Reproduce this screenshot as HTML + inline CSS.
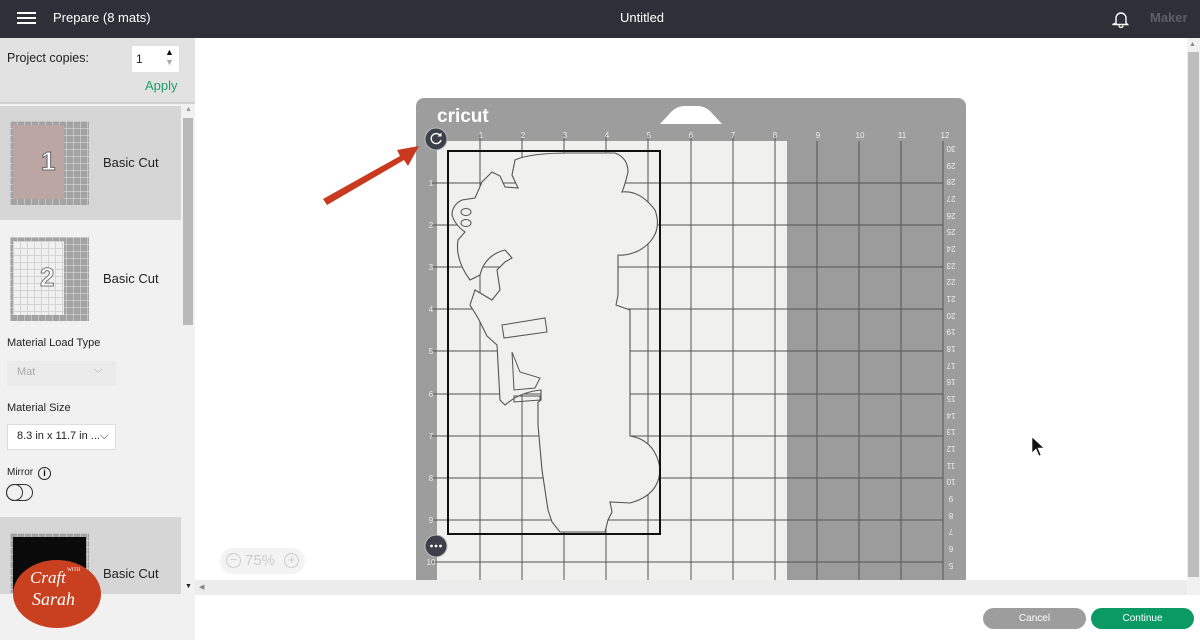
<!DOCTYPE html>
<html><head><meta charset="utf-8"><style>
*{margin:0;padding:0;box-sizing:border-box}
body{width:1200px;height:640px;overflow:hidden;background:#fff;font-family:"Liberation Sans",sans-serif;position:relative}
.a{position:absolute}
.th{background:#a3a3a3;background-image:linear-gradient(90deg,rgba(255,255,255,.35) 1px,transparent 1px),linear-gradient(rgba(255,255,255,.35) 1px,transparent 1px);background-size:7px 7px}
</style></head><body>
<div class="a" style="left:0;top:0;width:1200px;height:38px;background:#2e3037"></div>
<div class="a" style="left:17px;top:12px;width:19px;height:2px;background:#fff;box-shadow:0 5px 0 #fff,0 10px 0 #fff"></div>
<div class="a" style="left:53px;top:10px;color:#fff;font-size:13px">Prepare (8 mats)</div>
<div class="a" style="left:0;top:10px;text-align:center;color:#fff;font-size:13px;width:1284px">Untitled</div>
<svg class="a" style="left:1112px;top:10px" width="18" height="18" viewBox="0 0 18 18"><path d="M4 13V8a5 5 0 0 1 10 0v5l1.5 1.5h-15z M7 15.5a2 2 0 0 0 4 0" fill="none" stroke="#fff" stroke-width="1.4"/></svg>
<div class="a" style="left:1150px;top:10px;color:#5c5f66;font-size:13px;font-weight:bold">Maker</div>

<div class="a" style="left:0;top:38px;width:195px;height:602px;background:#f1f1f1"></div>
<div class="a" style="left:0;top:38px;width:195px;height:66px;background:#e2e2e2;border-bottom:2px solid #d0d0d0"></div>
<div class="a" style="left:7px;top:51px;font-size:12.5px;color:#222">Project copies:</div>
<div class="a" style="left:132px;top:46px;width:47px;height:26px;background:#fff;border-radius:2px"></div>
<div class="a" style="left:136px;top:52px;font-size:12px;color:#222">1</div>
<div class="a" style="left:165px;top:47px;font-size:9px;color:#111">▲</div>
<div class="a" style="left:165px;top:57px;font-size:9px;color:#aaa">▼</div>
<div class="a" style="left:145px;top:78px;font-size:13px;color:#1e9e68">Apply</div>

<div class="a" style="left:0;top:106px;width:181px;height:114px;background:#d6d6d6"></div>
<div class="a" style="left:0;top:517px;width:181px;height:77px;background:#d6d6d6"></div>

<div class="a th" style="left:10px;top:121px;width:79px;height:84px"></div>
<div class="a" style="left:13px;top:125px;width:51px;height:74px;background:#bba6a3"></div>
<div class="a" style="left:41px;top:146px;font-size:26px;color:#fff;font-weight:bold;-webkit-text-stroke:1px #666">1</div>
<div class="a" style="left:103px;top:155px;font-size:13px;color:#222">Basic Cut</div>

<div class="a th" style="left:10px;top:237px;width:79px;height:84px"></div>
<div class="a" style="left:13px;top:241px;width:51px;height:74px;background:#f0f0f0;background-image:linear-gradient(90deg,#d4d4d4 1px,transparent 1px),linear-gradient(#d4d4d4 1px,transparent 1px);background-size:7px 7px"></div>
<div class="a" style="left:40px;top:262px;font-size:26px;color:#fff;font-weight:bold;-webkit-text-stroke:1px #777">2</div>
<div class="a" style="left:103px;top:271px;font-size:13px;color:#222">Basic Cut</div>

<div class="a" style="left:7px;top:337px;font-size:11px;color:#222">Material Load Type</div>
<div class="a" style="left:7px;top:361px;width:109px;height:25px;background:#ebebeb"></div>
<div class="a" style="left:17px;top:366px;font-size:11px;color:#aaa">Mat</div>
<div class="a" style="left:94px;top:364px;font-size:11px;color:#aaa">⌵</div>
<div class="a" style="left:7px;top:402px;font-size:11px;color:#222">Material Size</div>
<div class="a" style="left:7px;top:424px;width:109px;height:26px;background:#fff;border:1px solid #ddd"></div>
<div class="a" style="left:17px;top:430px;font-size:11px;color:#222">8.3 in x 11.7 in ...⌵</div>
<div class="a" style="left:7px;top:467px;font-size:10px;color:#222">Mirror</div>
<div class="a" style="left:38px;top:467px;width:13px;height:13px;border:1.3px solid #222;border-radius:50%;font-size:9px;text-align:center;line-height:11px;font-weight:bold">i</div>
<div class="a" style="left:6px;top:484px;width:27px;height:17px;border:1.3px solid #333;border-radius:9px"></div>
<div class="a" style="left:6px;top:484px;width:17px;height:17px;border:1.3px solid #333;border-radius:50%"></div>

<div class="a th" style="left:10px;top:533px;width:79px;height:60px"></div>
<div class="a" style="left:13px;top:537px;width:73px;height:56px;background:#0a0a0a"></div>
<div class="a" style="left:103px;top:566px;font-size:13px;color:#222">Basic Cut</div>
<div class="a" style="left:182px;top:106px;width:12px;height:488px;background:#f1f1f1"></div>
<div class="a" style="left:183px;top:118px;width:10px;height:207px;background:#b9b9b9"></div>
<div class="a" style="left:185px;top:106px;font-size:7px;color:#999">▲</div>
<div class="a" style="left:185px;top:583px;font-size:7px;color:#222">▼</div>

<div class="a" style="left:13px;top:560px;width:88px;height:68px;border-radius:50%;background:#c8401f"></div>
<div class="a" style="left:30px;top:568px;font-family:'Liberation Serif',serif;font-style:italic;color:#fff;font-size:17px">Craft<span style="font-size:5px;font-style:normal;vertical-align:top"> WITH</span></div>
<div class="a" style="left:32px;top:589px;font-family:'Liberation Serif',serif;font-style:italic;color:#fff;font-size:18px">Sarah</div>

<div class="a" style="left:195px;top:580px;width:1005px;height:15px;background:#ececec"></div>
<div class="a" style="left:199px;top:583px;font-size:7px;color:#888">◀</div>
<div class="a" style="left:1187px;top:38px;width:13px;height:557px;background:#f1f1f1"></div>
<div class="a" style="left:1188px;top:52px;width:11px;height:525px;background:#bdbdbd"></div>
<div class="a" style="left:1189px;top:41px;font-size:7px;color:#888">▲</div>

<div class="a" style="left:220px;top:548px;width:85px;height:26px;background:#f3f3f3;border-radius:13px"></div>
<div class="a" style="left:226px;top:553px;width:15px;height:15px;border:1.3px solid #ccc;border-radius:50%;color:#ccc;font-size:13px;line-height:11px;text-align:center">−</div>
<div class="a" style="left:245px;top:552px;color:#ccc;font-size:15px">75%</div>
<div class="a" style="left:284px;top:553px;width:15px;height:15px;border:1.3px solid #ccc;border-radius:50%;color:#ccc;font-size:13px;line-height:12px;text-align:center">+</div>

<svg class="a" style="left:0;top:0" width="1200" height="640">
<path d="M416 580V106a8 8 0 0 1 8-8h534a8 8 0 0 1 8 8v474z" fill="#9d9d9d"/>
<path d="M660 124l12-13q6-5 12-5h14q6 0 12 5l12 13z" fill="#fff"/>
<text x="437" y="122" fill="#fff" font-size="19" font-weight="bold" font-family="Liberation Sans">cricut</text>
<rect x="437" y="141" width="350" height="439" fill="#f0f0ef"/>
<rect x="787" y="141" width="156" height="439" fill="#9c9c9c"/>
<g stroke="#555" stroke-width="1">
<path d="M480 135V580M522 135V580M564 135V580M606 135V580M648 135V580M691 135V580M733 135V580M775 135V580M817 141V580M859 141V580M901 141V580M943 141V580"/>
<path d="M432 183H943M432 225H943M432 267H943M432 309H943M432 351H943M432 394H943M432 436H943M432 478H943M432 520H943M432 562H943"/>
</g>
<g fill="#eee" font-size="8" font-family="Liberation Sans" text-anchor="middle">
<text x="481" y="138">1</text><text x="523" y="138">2</text><text x="565" y="138">3</text><text x="607" y="138">4</text><text x="649" y="138">5</text><text x="691" y="138">6</text><text x="733" y="138">7</text><text x="775" y="138">8</text><text x="818" y="138">9</text><text x="860" y="138">10</text><text x="902" y="138">11</text><text x="945" y="138">12</text>
<text x="431" y="186">1</text><text x="431" y="228">2</text><text x="431" y="270">3</text><text x="431" y="312">4</text><text x="431" y="354">5</text><text x="431" y="397">6</text><text x="431" y="439">7</text><text x="431" y="481">8</text><text x="431" y="523">9</text><text x="431" y="565">10</text>
</g>
<g fill="#eee" font-size="8" font-family="Liberation Sans" text-anchor="middle">
<text transform="translate(951,146) rotate(180)">30</text><text transform="translate(951,163) rotate(180)">29</text><text transform="translate(951,179) rotate(180)">28</text><text transform="translate(951,196) rotate(180)">27</text><text transform="translate(951,213) rotate(180)">26</text><text transform="translate(951,229) rotate(180)">25</text><text transform="translate(951,246) rotate(180)">24</text><text transform="translate(951,263) rotate(180)">23</text><text transform="translate(951,279) rotate(180)">22</text><text transform="translate(951,296) rotate(180)">21</text><text transform="translate(951,313) rotate(180)">20</text><text transform="translate(951,329) rotate(180)">19</text><text transform="translate(951,346) rotate(180)">18</text><text transform="translate(951,363) rotate(180)">17</text><text transform="translate(951,379) rotate(180)">16</text><text transform="translate(951,396) rotate(180)">15</text><text transform="translate(951,413) rotate(180)">14</text><text transform="translate(951,429) rotate(180)">13</text><text transform="translate(951,446) rotate(180)">12</text><text transform="translate(951,463) rotate(180)">11</text><text transform="translate(951,479) rotate(180)">10</text><text transform="translate(951,496) rotate(180)">9</text><text transform="translate(951,513) rotate(180)">8</text><text transform="translate(951,529) rotate(180)">7</text><text transform="translate(951,546) rotate(180)">6</text><text transform="translate(951,563) rotate(180)">5</text>
</g>
<path d="M515 160Q530 153 570 153L615 153Q628 158 628 172Q625 185 622 192Q640 190 655 210Q664 235 640 250Q628 256 618 255L618 295L616 305L630 310L630 436Q655 440 660 468Q660 495 630 503L610 502L612 512L608 520L605 532L560 532L552 522L548 510L542 470L538 425L538 402L541 400L541 390Q520 392 505 405L500 400L497 345L487 336L478 318L470 305L475 290L492 300L500 290L497 270L505 262L512 258L505 250Q485 255 480 275L470 280Q455 260 458 240L465 232Q455 225 452 215Q452 205 462 200L475 198L482 182L492 172L500 176L505 187L518 188L512 175Z" fill="#f0f0ef" stroke="#555" stroke-width="1.1"/>
<ellipse cx="466" cy="212" rx="5" ry="3.5" fill="none" stroke="#555"/>
<ellipse cx="466" cy="223" rx="5" ry="3.5" fill="none" stroke="#555"/>
<path d="M502 325L545 318L547 332L504 338Z M512 352L514 390L535 388L540 378L520 372Z M514 396L540 396L540 400L514 402Z" fill="none" stroke="#555"/>
<rect x="448" y="151" width="212" height="383" fill="none" stroke="#111" stroke-width="2"/>
<circle cx="436" cy="139" r="11" fill="#3b4049" stroke="#bbb" stroke-width="1"/>
<path d="M440.5 136a5 5 0 1 0 0.5 4" fill="none" stroke="#fff" stroke-width="1.4"/><path d="M441.5 132.5v4h-4z" fill="#fff"/>
<circle cx="436" cy="546" r="11" fill="#3b4049" stroke="#bbb" stroke-width="1"/>
<circle cx="431.5" cy="546" r="1.4" fill="#fff"/><circle cx="436" cy="546" r="1.4" fill="#fff"/><circle cx="440.5" cy="546" r="1.4" fill="#fff"/>
<path d="M323 199L400 156L397 150L419 146L408 166L404 160L327 205Z" fill="#c9391e"/>
<path d="M1032 437L1032 453L1036 449L1039 456L1041 455L1038 448L1044 448Z" fill="#111" stroke="#fff" stroke-width=".6"/>
</svg>

<div class="a" style="left:983px;top:608px;width:103px;height:21px;background:#9d9d9d;border-radius:11px;color:#fff;font-size:10px;text-align:center;line-height:21px">Cancel</div>
<div class="a" style="left:1091px;top:608px;width:103px;height:21px;background:#0b9a64;border-radius:11px;color:#fff;font-size:10px;text-align:center;line-height:21px">Continue</div>
</body></html>
